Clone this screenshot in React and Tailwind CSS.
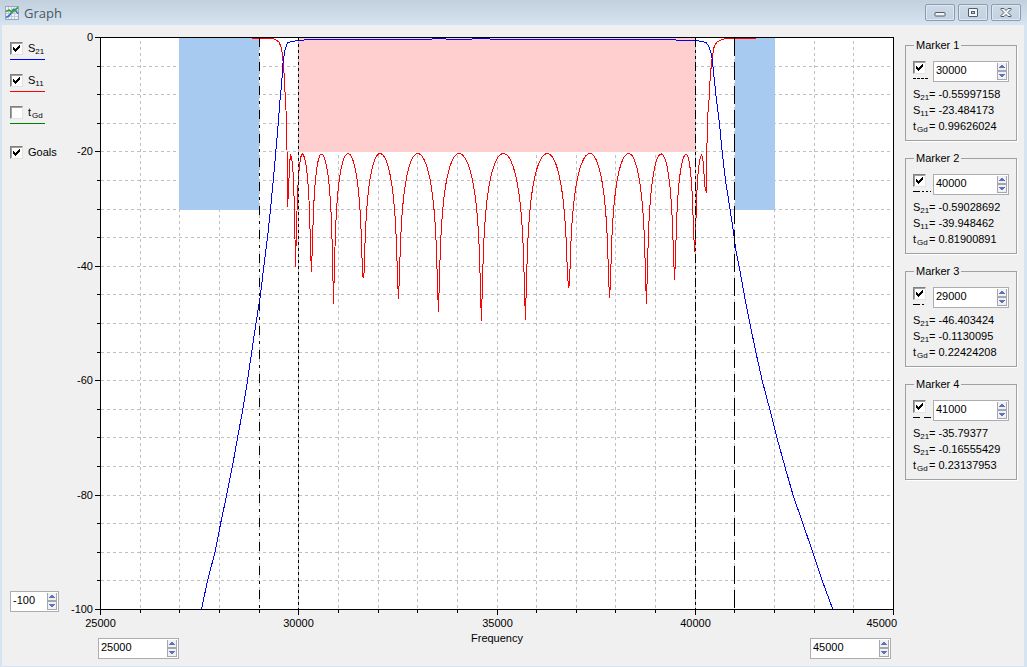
import React, { useState } from "react";

const PLOT = { left: 100, right: 893, top: 37, bottom: 609 };

const xOf = (f) =>
  Math.round(PLOT.left + ((f - 25000) * (PLOT.right - PLOT.left)) / 20000) + 0.5;
const yOf = (db) =>
  Math.round(PLOT.top - (db * (PLOT.bottom - PLOT.top)) / 100) + 0.5;

const S21 = [
  [201.5, 609], [207.7, 580], [215, 552], [220.7, 523], [226.7, 495],
  [232.3, 467], [237.7, 437], [242.7, 410], [247.3, 382], [251.7, 352],
  [256, 323], [260.3, 296], [264, 265], [268, 233], [270.7, 207],
  [273.3, 180], [275.7, 153], [278.3, 123], [280, 100], [281.7, 83],
  [283, 63], [285, 50], [287.3, 43], [291.7, 41.5], [298, 40.5],
  [310, 39.5], [431, 39.5], [433, 38.5], [445, 38.5], [447, 39.5],
  [471, 39.5], [473, 38.5], [489, 38.5], [491, 39.5], [675, 39.5],
  [677, 40.5], [695, 40.5], [702, 41.5], [706, 42.5], [709, 46.7],
  [711.7, 55], [713.3, 70], [715.7, 93], [719.3, 122], [722.3, 153],
  [725.7, 182], [729.7, 207], [733.7, 233], [735.3, 247], [739.3, 267],
  [744.3, 295], [750, 324], [756, 353], [762.3, 381], [769.7, 409],
  [777, 438], [785, 467], [793.3, 496], [802.7, 523], [813, 553],
  [822.3, 581], [832.7, 609],
];

const S11_START = [
  [252, 38.5], [273, 38.5], [276, 40], [279, 42], [281, 47], [282.5, 55],
  [284, 73], [285, 92], [286, 110], [287, 150],
];
const S11_END = [
  [707.3, 120], [709, 100], [710.3, 75], [712.3, 57], [714.3, 46],
  [717.3, 41.7], [721.7, 39.7], [726, 38.5], [756, 38.5],
];
const NULLS = [
  [287.5, 207], [295.5, 267], [311.4, 272], [333.5, 304], [363.2, 278],
  [398.4, 299], [438.4, 312], [481.4, 321], [525.4, 320], [568.6, 288],
  [609.6, 298], [646.5, 304], [674.6, 280], [694.7, 252], [706.4, 193],
];
const PEAKS = [
  [290.7, 155], [302.3, 154], [321.4, 154], [348, 153.5], [380, 153.5],
  [417.7, 153.5], [459, 153.5], [503.4, 153.5], [547.3, 153.5],
  [590, 153.5], [628.7, 153.5], [661.3, 154], [686.3, 154], [701.6, 155],
];

/* Ripple lobes between neighbouring reflection zeros, in dB of a sine. */
function ripple() {
  const pts = [];
  PEAKS.forEach(([px, py], i) => {
    const [ax, ay] = NULLS[i];
    const [bx, by] = NULLS[i + 1];
    pts.push([ax, ay]);
    for (let x = ax + 1; x < bx - 0.5; x += 1) {
      const u = x < px ? (0.5 * (x - ax)) / (px - ax) : 1 - (0.5 * (bx - x)) / (bx - px);
      const y = py - 114.4 * Math.log10(Math.sin(Math.PI * u));
      pts.push([x, Math.min(y, (x < px ? ay : by) - 4)]);
    }
  });
  pts.push(NULLS[NULLS.length - 1]);
  return pts;
}

const toPoints = (pts) => pts.map(([x, y]) => `${x.toFixed(1)},${y.toFixed(1)}`).join(" ");
const S11 = [...S11_START, ...ripple(), ...S11_END];

const MARKERS = [
  { name: "Marker 1", freq: 30000, dash: "3 3", sample: "3 1", rows: [["S", "21", "-0.55997158"], ["S", "11", "-23.484173"], ["t", "Gd", "0.99626024"]] },
  { name: "Marker 2", freq: 40000, dash: "9 3 3 3 3 3", sample: "7 2 2 2 2 2", rows: [["S", "21", "-0.59028692"], ["S", "11", "-39.948462"], ["t", "Gd", "0.81900891"]] },
  { name: "Marker 3", freq: 29000, dash: "9 6 3 6", sample: "7 2 2 9", rows: [["S", "21", "-46.403424"], ["S", "21", "-0.1130095"], ["t", "Gd", "0.22424208"]] },
  { name: "Marker 4", freq: 41000, dash: "18 6", sample: "7 4", rows: [["S", "21", "-35.79377"], ["S", "21", "-0.16555429"], ["t", "Gd", "0.23137953"]] },
];

function CheckBox({ id, label, defaultChecked, onToggle }) {
  return (
    <span className="grid h-[13px] w-[13px] shrink-0">
      <input
        id={id}
        type="checkbox"
        aria-label={label}
        defaultChecked={defaultChecked}
        onChange={(e) => onToggle && onToggle(e.target.checked)}
        className="peer col-start-1 row-start-1 h-[13px] w-[13px] appearance-none border border-t-[#808080] border-r-[#e3e3e3] border-b-[#e3e3e3] border-l-[#808080] bg-white shadow-[inset_1px_1px_0_#a0a0a0]"
      />
      <svg
        viewBox="0 0 13 13"
        shapeRendering="crispEdges"
        className="pointer-events-none invisible col-start-1 row-start-1 h-[13px] w-[13px] peer-checked:visible"
      >
        <path d="M3 5h1v3h-1zM4 6h1v3h-1zM5 7h1v3h-1zM6 6h1v3h-1zM7 5h1v3h-1zM8 4h1v3h-1zM9 3h1v3h-1z" fill="#000" />
      </svg>
    </span>
  );
}

function Spinner({ label, initial, step, className }) {
  const [value, setValue] = useState(String(initial));
  const bump = (d) => setValue((v) => String(Number(v) + d));
  return (
    <div className={`flex h-[21px] border border-[#abadb3] bg-white ${className}`}>
      <input
        type="text"
        aria-label={label}
        value={value}
        onChange={(e) => setValue(e.target.value)}
        className="w-0 min-w-0 flex-1 bg-transparent pb-[2px] pl-[2px] text-black outline-none"
      />
      <div className="mt-px mr-px mb-px flex w-[10px] flex-col justify-between bg-[#a5a7b0] px-px pb-px">
        <button type="button" aria-label={`Increase ${label}`} onClick={() => bump(step)} className="flex h-[7px] items-center justify-center bg-[#f1f1f3]">
          <svg viewBox="0 0 8 7" shapeRendering="crispEdges" className="h-[7px] w-[8px]">
            <path d="M3 2h2v1h1v1h1v1H1V4h1V3h1z" fill="#5b74b8" />
          </svg>
        </button>
        <button type="button" aria-label={`Decrease ${label}`} onClick={() => bump(-step)} className="flex h-[7px] items-center justify-center bg-[#f1f1f3]">
          <svg viewBox="0 0 8 7" shapeRendering="crispEdges" className="h-[7px] w-[8px]">
            <path d="M1 2h6v1H6v1H5v1H3V4H2V3H1z" fill="#5b74b8" />
          </svg>
        </button>
      </div>
    </div>
  );
}

function Symbol({ base, sub }) {
  return (
    <>
      {base}
      <sub className={base === "t" ? "bottom-0 ml-px align-[-2px] text-[8px] leading-none" : "bottom-0 align-[-2px] text-[8px] leading-none"}>{sub}</sub>
    </>
  );
}

function TraceToggle({ id, base, sub, line, checked, onToggle }) {
  return (
    <div className={`flex h-[18px] w-[35px] items-start gap-[5px] border-b ${line}`}>
      <CheckBox id={id} defaultChecked={checked} onToggle={onToggle} />
      <label htmlFor={id} className="leading-[13px] whitespace-nowrap">
        <Symbol base={base} sub={sub} />
      </label>
    </div>
  );
}

function MarkerGroup({ marker, onToggle }) {
  return (
    <fieldset className="border border-[#a0a0a0] px-[7px] pt-[9px] pb-[6px] shadow-[1px_1px_0_#ffffff]">
      <legend className="ml-px px-[2px] leading-[14px]">{marker.name}</legend>
      <div className="flex gap-[7px]">
        <div className="flex w-[13px] flex-col gap-[4px]">
          <CheckBox label={`Show ${marker.name}`} defaultChecked onToggle={onToggle} />
          <svg viewBox="0 0 18 1" shapeRendering="crispEdges" className="h-px w-[18px] shrink-0">
            <path d={marker.freq === 30000 ? "M0 .5h15" : "M0 .5h18"} stroke="#000" strokeDasharray={marker.sample} />
          </svg>
        </div>
        <Spinner label={`${marker.name} frequency`} initial={marker.freq} step={100} className="flex-1" />
      </div>
      <div className="mt-[4px] leading-[16px] whitespace-nowrap">
        {marker.rows.map(([base, sub, value], i) => (
          <p key={i} className="flex h-[16px]">
            <span className="w-[16px]">
              <Symbol base={base} sub={sub} />
            </span>
            <span>= {value}</span>
          </p>
        ))}
      </div>
    </fieldset>
  );
}

function Chart({ show, markersOn }) {
  const minorX = Array.from({ length: 21 }, (_, i) => 25000 + i * 1000);
  const minorY = Array.from({ length: 21 }, (_, i) => -i * 5);
  return (
    <svg
      viewBox="60 25 840 613"
      shapeRendering="crispEdges"
      className="block h-auto w-full overflow-visible"
      role="img"
      aria-label="S-parameters against frequency"
    >
      <rect x="100" y="37" width="793" height="572" fill="#fff" />
      <g stroke="#c0c0c0" strokeDasharray="3 3">
        {minorX.slice(1, -1).map((f) => (
          <path key={f} d={`M${xOf(f)} 608V38`} />
        ))}
        {minorY.slice(1, -1).map((d) => (
          <path key={d} d={`M101 ${yOf(d)}H893`} />
        ))}
      </g>
      {show.goals && (
        <g>
          <rect x="179" y="38" width="80" height="172" fill="#a6caf0" />
          <rect x="735" y="38" width="40" height="172" fill="#a6caf0" />
          <rect x="299" y="38" width="396" height="114" fill="#ffcfcf" />
        </g>
      )}
      <g fill="none" strokeWidth="1">
        {show.s11 && <polyline points={toPoints(S11)} stroke="#ff0000" />}
        {show.s21 && <polyline points={toPoints(S21)} stroke="#0000ff" />}
      </g>
      <g stroke="#000">
        {MARKERS.map((m, i) =>
          markersOn[i] ? <path key={m.name} d={`M${xOf(m.freq)} 38V609`} strokeDasharray={m.dash} /> : null
        )}
      </g>
      <rect x="100.5" y="37.5" width="793" height="572" fill="none" stroke="#000" />
      <g stroke="#000">
        {minorX.map((f) => (
          <path key={f} d={`M${xOf(f)} 610v${f % 5000 === 0 ? 5 : 3}`} />
        ))}
        {minorY.map((d) => (
          <path key={d} d={`M100 ${yOf(d)}h${d % 20 === 0 ? -5 : -3}`} />
        ))}
      </g>
      <g fill="#000" fontSize="11">
        {[0, -20, -40, -60, -80, -100].map((d) => (
          <text key={d} x="93" y={yOf(d) + 3.5} textAnchor="end">{d}</text>
        ))}
        {[25000, 30000, 35000, 40000].map((f) => (
          <text key={f} x={xOf(f)} y="627" textAnchor="middle">{f}</text>
        ))}
        <text x="897" y="627" textAnchor="end">45000</text>
        <text x="497" y="642" textAnchor="middle">Frequency</text>
      </g>
    </svg>
  );
}

function WindowButton({ label, children }) {
  return (
    <button
      type="button"
      aria-label={label}
      className="flex h-[17px] w-[30px] items-center justify-center rounded-[2px] border border-[#8c9bad] bg-linear-to-b from-[#ccd9e6] to-[#c3d2e1] shadow-[inset_0_0_0_1px_#dfe8f1]"
    >
      <svg viewBox="0 0 12 11" className="h-[11px] w-[12px]">{children}</svg>
    </button>
  );
}

export default function App() {
  const [show, setShow] = useState({ s21: true, s11: true, goals: true });
  const [markersOn, setMarkersOn] = useState([true, true, true, true]);
  const set = (key) => (v) => setShow((s) => ({ ...s, [key]: v }));

  return (
    <div className="flex min-h-screen flex-col bg-[#d6e4f2] pr-[3px] pb-px pl-[2px] font-['Liberation_Sans',Arial,sans-serif] text-[11px] text-black">
      <header className="-mr-[3px] -ml-[2px] flex h-[25px] items-center justify-between bg-linear-to-b from-[#c2d0de] to-[#d6e4f2] pr-[6px] pl-[5px]">
        <div className="flex items-center gap-[5px]">
          <svg viewBox="0 0 14 14" className="h-[14px] w-[14px]">
            <rect x=".5" y=".5" width="13" height="13" fill="#eef1f8" stroke="#9aa5bb" />
            <path d="M3.5 1v12M6.5 1v12M9.5 1v12M1 4.5h12M1 7.5h12M1 10.5h12" stroke="#b9c1d6" strokeWidth=".8" />
            <path d="M1 11.5C4 11 5 9 6.5 6.5S8 2.500 9.500 3.500L13 7.500" fill="none" stroke="#2f6fd0" strokeWidth="1.500" />
            <path d="M1 5.500L4 4l3 2.500L10 4l3-2.500" fill="none" stroke="#3aa52f" strokeWidth="1.700" />
          </svg>
          <h1 className="font-['Open_Sans','Noto_Sans',sans-serif] text-[13px] leading-[20px] text-[#4c5763]">Graph</h1>
        </div>
        <div className="flex gap-[3px]">
          <WindowButton label="Minimize">
            <rect x="1" y="5.500" width="10" height="3.500" rx=".5" fill="#f2f5f8" stroke="#535c68" />
          </WindowButton>
          <WindowButton label="Restore">
            <rect x="1.500" y="1.500" width="9" height="8" rx=".5" fill="#f2f5f8" stroke="#535c68" />
            <rect x="4.500" y="4.500" width="3" height="2" fill="#c7d5e3" stroke="#535c68" />
          </WindowButton>
          <WindowButton label="Close">
            <path d="M1 1.500h3l2 2 2-2h3v1L8 5.500l3 3v1H8l-2-2-2 2H1v-1l3-3-3-3z" fill="#f2f5f8" stroke="#535c68" />
          </WindowButton>
        </div>
      </header>

      <main className="flex flex-1 items-start bg-[#f0f0f0]">
        <aside className="flex w-[58px] shrink-0 flex-col justify-between self-stretch pt-[17px] pb-[54px] pl-[8px]">
          <div className="flex flex-col gap-[14px]">
            <TraceToggle id="s21" base="S" sub="21" line="border-[#0000ff]" checked onToggle={set("s21")} />
            <TraceToggle id="s11" base="S" sub="11" line="border-[#ff0000]" checked onToggle={set("s11")} />
            <TraceToggle id="tgd" base="t" sub="Gd" line="border-[#008000]" checked={false} />
            <div className="mt-[8px] flex items-start gap-[5px]">
              <CheckBox id="goals" defaultChecked onToggle={set("goals")} />
              <label htmlFor="goals" className="leading-[13px]">Goals</label>
            </div>
          </div>
          <Spinner label="Minimum level" initial={-100} step={10} className="w-[49px]" />
        </aside>

        <section className="min-w-0 flex-1">
          <Chart show={show} markersOn={markersOn} />
          <div className="flex justify-between pr-[9px] pl-[38px]">
            <Spinner label="Start frequency" initial={25000} step={1000} className="w-[81px]" />
            <Spinner label="Stop frequency" initial={45000} step={1000} className="w-[81px]" />
          </div>
        </section>

        <aside className="flex w-[124px] shrink-0 flex-col gap-[10px] pt-[13px] pr-[7px] pl-[5px]">
          {MARKERS.map((m, i) => (
            <MarkerGroup
              key={m.name}
              marker={m}
              onToggle={(v) => setMarkersOn((on) => on.map((o, j) => (j === i ? v : o)))}
            />
          ))}
        </aside>
      </main>
    </div>
  );
}
